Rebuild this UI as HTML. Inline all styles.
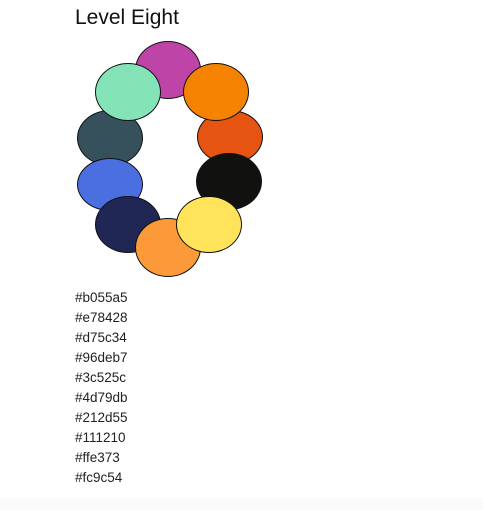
<!DOCTYPE html>
<html><head><style>
body{margin:0;width:483px;height:510px;background:#fff;position:relative;overflow:hidden;font-family:"Liberation Sans",sans-serif}
h1{position:absolute;left:75px;top:6px;margin:0;font-size:21px;font-weight:normal;color:#111}
.e{position:absolute;width:66px;height:56px;border:1px solid #111;border-radius:50%;box-sizing:border-box}
.l{position:absolute;left:75px;top:288px;font-size:13.5px;line-height:20px;color:#222}
.b{position:absolute;left:0;top:498px;width:483px;height:12px;background:#fafafa}
</style></head><body>
<h1>Level Eight</h1>
<div class="e" style="left:135px;top:41px;height:58px;background:#bf44a8"></div>
<div class="e" style="left:197px;top:110px;height:54px;background:#e65412"></div>
<div class="e" style="left:183px;top:63px;height:58px;background:#f58200"></div>
<div class="e" style="left:196px;top:153px;height:57px;background:#111210"></div>
<div class="e" style="left:77px;top:110px;height:56px;background:#36505c"></div>
<div class="e" style="left:77px;top:158px;height:53px;background:#4b6fe0"></div>
<div class="e" style="left:95px;top:196px;height:57px;background:#212755"></div>
<div class="e" style="left:135px;top:218px;height:59px;background:#fc9a3a"></div>
<div class="e" style="left:176px;top:196px;height:57px;background:#ffe35a"></div>
<div class="e" style="left:95px;top:63px;height:58px;background:#84e4b8"></div>
<div class="l">#b055a5<br>#e78428<br>#d75c34<br>#96deb7<br>#3c525c<br>#4d79db<br>#212d55<br>#111210<br>#ffe373<br>#fc9c54</div>
<div class="b"></div>
</body></html>
